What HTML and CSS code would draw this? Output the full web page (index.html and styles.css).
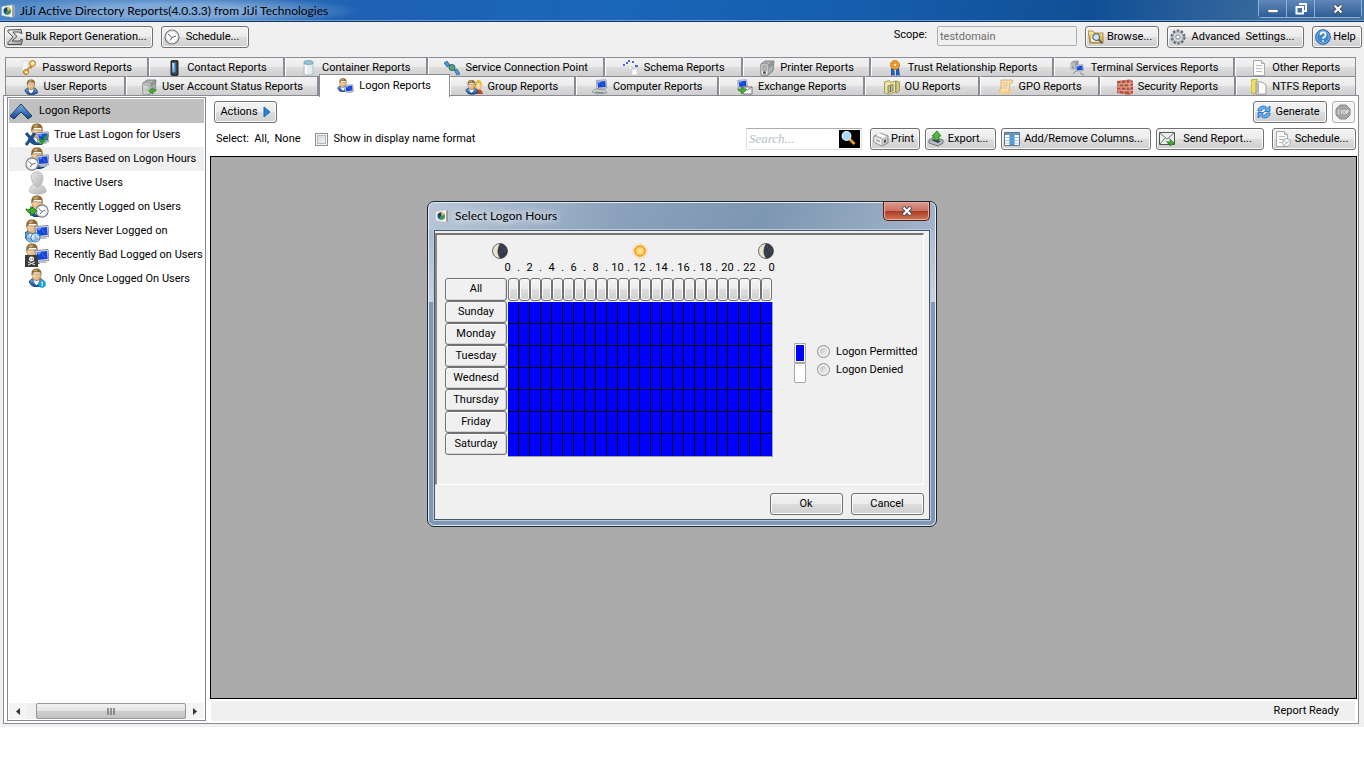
FILE: index.html
```html
<!DOCTYPE html>
<html lang="en">
<head>
<meta charset="utf-8">
<title>JiJi Active Directory Reports</title>
<link rel="stylesheet" href="styles.css">
</head>
<body>
<svg class="sprite" aria-hidden="true">
  <defs>
    <linearGradient id="g-blue" x1="0" y1="0" x2="0" y2="1"><stop offset="0" stop-color="#7cb4e8"/><stop offset="1" stop-color="#12438c"/></linearGradient>
    <linearGradient id="g-steel" x1="0" y1="0" x2="1" y2="1"><stop offset="0" stop-color="#fdfdfd"/><stop offset="1" stop-color="#8d949b"/></linearGradient>
    <linearGradient id="g-gold" x1="0" y1="0" x2="0" y2="1"><stop offset="0" stop-color="#fdf0a8"/><stop offset="1" stop-color="#d9992a"/></linearGradient>
    <linearGradient id="g-skin" x1="0" y1="0" x2="1" y2="1"><stop offset="0" stop-color="#fbe2bd"/><stop offset="1" stop-color="#d99a5b"/></linearGradient>
    <linearGradient id="g-grey" x1="0" y1="0" x2="1" y2="1"><stop offset="0" stop-color="#e6e6e6"/><stop offset="1" stop-color="#b4b4b4"/></linearGradient>
    <radialGradient id="g-sun"><stop offset="0" stop-color="#fff8b0"/><stop offset="1" stop-color="#fbb52c"/></radialGradient>
  </defs>
  <symbol id="user" viewBox="0 0 16 16"><path d="M2 12c0-2 2-3 4-3l4-.5c3 .5 4.500 2.500 4.500 5.500q-3 2-7 1.800T2 12z" fill="url(#g-blue)" stroke="#0c3468" stroke-width=".7"/><path d="M6 9.500l2 1.500 2-1.500v3l-2 2-2-2z" fill="#fff"/><path d="M4.200 5c0 3 1.600 5.800 3.800 5.800s3.800-2.800 3.800-5.800z" fill="url(#g-skin)" stroke="#9a6733" stroke-width=".5"/><path d="M4 6C3.300 2.300 5 .4 8 .4S12.700 2.300 12 6l-1-2.300-5-.2z" fill="#8a6a35"/><path d="M5 2.500Q7 .5 9 1.500L8 3z" fill="#c7a565"/></symbol>
  <symbol id="greyuser" viewBox="0 0 16 16"><path d="M3 14c0-3 1-5 3.500-5h3c3 .5 4.500 2.500 4.500 5q-5 3-11 0z" fill="url(#g-grey)" stroke="#a6a6a6" stroke-width=".4"/><path d="M4 4q.5-3.500 4-3.500T12 4q0 6-4 6.500Q5 9.500 4 4z" fill="url(#g-grey)" stroke="#b4b4b4" stroke-width=".5"/></symbol>
  <symbol id="monitor" viewBox="0 0 16 16"><path d="M1 2l13-1 1 11-13 1z" fill="#e3e7ec" stroke="#6b7480" stroke-width=".8"/><path d="M2.500 3.500l10.500-1 .7 8-10.200 1z" fill="#1746d4"/><path d="M3 4l4-.4-2 2.500zM8 5l3 4" fill="#6ba4ff" stroke="#6ba4ff" stroke-width=".5"/><path d="M4 13l7-1 2 2.500H4z" fill="#b8bec5"/></symbol>
  <symbol id="clock" viewBox="0 0 16 16"><circle cx="8" cy="8" r="7" fill="#f4f5f6" stroke="#747a80" stroke-width="1.200"/><circle cx="8" cy="8" r="5.600" fill="#fff" stroke="#c8ccd0" stroke-width=".6"/><path d="M4 5l4 3.500 4-1.500M8 8.500l-2 3" fill="none" stroke="#555b62"/></symbol>
  <symbol id="arrow" viewBox="0 0 16 16"><path d="M1 6l6 1V3l8 5.500-8 6v-4C4 11 2 9 1 6z" fill="#42ae2a" stroke="#176b10" stroke-width=".8"/></symbol>
  <symbol id="logo" viewBox="0 0 16 16"><path d="M1 3l12-2 2 1v12l-2 1-12-2z" fill="#f8f8f4" stroke="#c8c8c0" stroke-width=".7"/><path d="M13 1v14l1.500-1V2z" fill="#70767c"/><circle cx="7" cy="8" r="4.300" fill="#2468b8"/><path d="M7 3.800c2 0 3.500 1 4 3L7 8z" fill="#eec52b"/><path d="M11.300 8c0 3-2 4.300-4.300 4.300L5 9l3-1z" fill="#3f9b3b"/><path d="M3.500 6l3-2 1 3-3 3z" fill="#153c74"/></symbol>
  <symbol id="sigma" viewBox="0 0 16 16"><path d="M1 1l13-.5 1 4-2-.5-.5-1H6l4 4.500-5 4.500h8l1-2 1.500.5-1 5H1v-2l5-5.500-5-5z" fill="url(#g-steel)" stroke="#444" stroke-width=".9"/></symbol>
  <symbol id="keys" viewBox="0 0 16 16"><path d="M1 1h6v10H1z" fill="#f4f4f4" stroke="#cfcfcf" stroke-width=".6"/><circle cx="11.500" cy="3.500" r="3" fill="#f8d87a" stroke="#b07a1e"/><circle cx="12" cy="3" r="1" fill="#fff"/><path d="M10 6l-4 4M9 7l2 1" stroke="#bd8628" stroke-width="1.600"/><circle cx="5" cy="12" r="2.500" fill="#f5c760" stroke="#a86f18"/><path d="M5 12l2 1" stroke="#fff"/></symbol>
  <symbol id="phone" viewBox="0 0 16 16"><path d="M5 1l5-1 2 1v14l-3 1-4-1z" fill="#3a4148" stroke="#222"/><path d="M6 3l3.500-.4v10L6 12.500z" fill="#5f9ad8"/><path d="M6 3l2 0v9z" fill="#b9dcf7"/></symbol>
  <symbol id="jar" viewBox="0 0 16 16"><path d="M3 3h9v11q-4.500 2.500-9 0z" fill="#e2ecf1" stroke="#a2b1b9" stroke-width=".7"/><ellipse cx="7.500" cy="2.500" rx="4.800" ry="2" fill="#92c8dc" stroke="#5e8f9f" stroke-width=".6"/><path d="M5 5v9" stroke="#fff" stroke-width="2"/></symbol>
  <symbol id="satellite" viewBox="0 0 16 16"><path d="M0 3l3-2 3 4-3 2zM10 10l3-1 3 5-3 1z" fill="#4b9ad3" stroke="#174d7c" stroke-width=".6"/><path d="M4 5l7 5" stroke="#667" stroke-width="1.500"/><circle cx="8" cy="7.500" r="3" fill="#57a85f" stroke="#2264a4"/></symbol>
  <symbol id="schema" viewBox="0 0 16 16"><path d="M0 5h2M3 3h2M5 1h2M9 2h2M12 6h3" fill="none" stroke="#1c35dc" stroke-width="1.600"/><path d="M5 7h4v2H5zM9 9h5v6H9z" fill="#fff" stroke="#b8b8b8" stroke-width=".7" stroke-dasharray="2 1"/></symbol>
  <symbol id="server" viewBox="0 0 16 16"><path d="M2 4l4-3h9l-1 10-5 4H2z" fill="#adb2b6" stroke="#666" stroke-width=".7"/><path d="M2 4h7v11H2z" fill="#e7e8e9" stroke="#777" stroke-width=".6"/><path d="M3 6h5M3 8h5M3 10h5M10 5l4-3M10 7l4-3" stroke="#777"/><circle cx="5.500" cy="12.500" r="1.500" fill="#555"/></symbol>
  <symbol id="rosette" viewBox="0 0 16 16"><path d="M4 8h3l1 8-2-1-2 1zM9 8h3l1 8-2-1-2 1z" fill="#1d5bbb"/><circle cx="8" cy="5" r="4.500" fill="#f39c27" stroke="#b66913" stroke-dasharray="2 1"/><circle cx="8" cy="5" r="2" fill="#ffd98a" stroke="#b66913" stroke-width=".6"/></symbol>
  <symbol id="doc" viewBox="0 0 16 16"><path d="M2.500.5h8l3 3v12h-11z" fill="#fafafa" stroke="#aaa"/><path d="M10.500.5v3h3" fill="#ddd" stroke="#aaa"/><path d="M5 5.500h6M5 8.500h6M5 11.500h6" stroke="#bdbdbd"/></symbol>
  <symbol id="wall" viewBox="0 0 16 16"><path d="M0 2l13-1.500L16 2v12l-3 2L0 14z" fill="#b7503e"/><path d="M0 5l13-.5 3-1M0 8h13l3-1M0 11l13 1 3-1M4 2v3M9 1v4M2 5v3M7 5v3M12 4v4M4 8v3M9 8v4M2 11v3M7 11v4M13 1v15" stroke="#e9c3b4" fill="none" stroke-width=".8"/></symbol>
  <symbol id="files" viewBox="0 0 16 16"><path d="M0 1l6-1v13l-3 2-3-2z" fill="#f0e060" stroke="#9e8d20" stroke-width=".7"/><path d="M5 3h6l4 3v9H5z" fill="#fff" stroke="#888" stroke-width=".8"/><path d="M5 4h3v10H5z" fill="#aeb5bb"/></symbol>
  <symbol id="scroll" viewBox="0 0 16 16"><path d="M3 1h11q2 1 0 3h-2l-1 9H1q-1-2 2-3z" fill="#fae0ad" stroke="#d3a765" stroke-width=".8"/><path d="M5 4h5M5 6.500h5M4 9h5" stroke="#e2c28b"/><path d="M1 12q0 3 3 3h9q2-1 1-3z" fill="#f3cd8c"/></symbol>
  <symbol id="folder" viewBox="0 0 16 16"><path d="M0 2h5l1 2h9v10H2z" fill="url(#g-gold)" stroke="#95732b" stroke-width=".8"/><path d="M3 6h9v7H3z" fill="#fffbe7" stroke="#aaa15b" stroke-width=".5"/></symbol>
  <symbol id="ou" viewBox="0 0 16 16"><path d="M.5 3l5-1.500 1 2 5-1.500V13l-6 2-5-1z" fill="#efe5a3" stroke="#98894a" stroke-width=".8"/><path d="M12 2l3.500 1v9L12 14z" fill="#d6cc87" stroke="#98894a" stroke-width=".8"/><path d="M4 7l5-1.500V12L4 13.500z" fill="#b9c49a" stroke="#75734a" stroke-width=".8"/><path d="M6.500 6.500v6" stroke="#75734a"/></symbol>
  <symbol id="lens" viewBox="0 0 16 16"><path d="M9 9l5 5" stroke="#5a5a5a" stroke-width="2"/><circle cx="7" cy="7" r="3.800" fill="#cfe5f4" stroke="#565f66" stroke-width="1.200"/></symbol>
  <symbol id="gear" viewBox="0 0 16 16"><circle cx="8" cy="8" r="6.300" fill="none" stroke="#68727d" stroke-width="2.600" stroke-dasharray="2.500 1.450"/><circle cx="8" cy="8" r="5.300" fill="#d5d9de" stroke="#848d97"/><circle cx="8" cy="8" r="2.200" fill="#fff" stroke="#7a828a"/></symbol>
  <symbol id="help" viewBox="0 0 16 16"><circle cx="8" cy="8" r="7.300" fill="#3c89d6" stroke="#235792"/><circle cx="8" cy="8" r="6.200" fill="none" stroke="#9bc8f2" stroke-width=".7"/><path d="M5.500 6q0-2.600 2.600-2.600T10.600 6q0 1.300-1.300 2T8 9.800M8 11.300v1.500" stroke="#fff" stroke-width="1.700" fill="none"/></symbol>
  <symbol id="refresh" viewBox="0 0 16 16"><path d="M2 7q0-4.500 5-5 3 0 4.500 2L14 2v5.500H8.500l1.700-1.700Q7.500 3 5 7zM14 9q0 4.500-5 5-3 0-4.500-2L2 14V8.500h5.500l-1.700 1.700Q8.500 13 11 9z" fill="#67b0f0" stroke="#176aba" stroke-width=".8"/></symbol>
  <symbol id="stop" viewBox="0 0 16 16"><path d="M5 1h6l4 4v6l-4 4H5l-4-4V5z" fill="#a5a5a5" stroke="#888"/><path d="M2.500 6.500h2M2.500 8h2M2.500 9.500h2M5.500 6.500h2M6.500 6.500v3.500M8.500 6.500h2v3h-2zM11.500 10V6.500h2V8h-2" fill="none" stroke="#e6e6e6" stroke-width=".8"/></symbol>
  <symbol id="printer" viewBox="0 0 16 16"><path d="M1 5l6-3 8 3v7l-6 3-8-4z" fill="#c9cbcc" stroke="#777" stroke-width=".8"/><path d="M1 5l8 3v7l-8-4z" fill="#f3f3f3" stroke="#888" stroke-width=".6"/><path d="M3 4l3-2 7 3-3 2z" fill="#fff"/><path d="M3 8l4 1.500v2L3 10z" fill="#aab0b2"/><path d="M11 9l2-.7v3l-2 .7z" fill="#4f5558"/></symbol>
  <symbol id="export" viewBox="0 0 16 16"><path d="M1 9l4-3 10 3v3l-5 3-9-3z" fill="#b8bdc6" stroke="#555e6b" stroke-width=".8"/><path d="M3 9l3-1 7 2-3 2z" fill="#34404e"/><path d="M6 9V5H4l5-5 4 5h-2v4z" fill="#52b83b" stroke="#237c19" stroke-width=".8"/></symbol>
  <symbol id="columns" viewBox="0 0 16 16"><path d="M.5 1.500h15v13H.5z" fill="#fff" stroke="#5d7a94"/><path d="M6 2h4v12H6z" fill="#3c9be8"/><path d="M1 2h14v2H1z" fill="#6793b8"/><path d="M1 6.500h14M1 9.500h14M1 12h14M5.500 2v12M10.500 2v12" stroke="#8ba7bd" stroke-width=".7"/></symbol>
  <symbol id="mail" viewBox="0 0 16 16"><path d="M.5 1.500h15v12H.5z" fill="#eceeee" stroke="#555"/><path d="M1 2l7 6 7-6M1 13l5-6M15 13l-5-6" fill="none" stroke="#777"/></symbol>
  <symbol id="chevron" viewBox="0 0 24 18"><path d="M1 14L12 2l11 12-4 3-7-7-7 7z" fill="url(#g-blue)" stroke="#173b68"/></symbol>
  <symbol id="moon" viewBox="0 0 16 16"><circle cx="8" cy="8" r="7.500" fill="#e9e2cf" stroke="#6b6b68"/><path d="M8 .6q-5 7.400 0 14.800A7.400 7.400 0 0 0 8 .6z" fill="#343c49"/><path d="M9 4h2M10 8h3M8 11h2M12 5v1" stroke="#59616c" stroke-dasharray="1 1"/></symbol>
  <symbol id="sun" viewBox="0 0 16 16"><circle cx="8" cy="8" r="6.500" fill="none" stroke="#ffcd78" stroke-width="2" stroke-dasharray="1 1"/><circle cx="8" cy="8" r="5.200" fill="url(#g-sun)" stroke="#f18c16"/></symbol>
  <symbol id="magnify" viewBox="0 0 20 18"><path d="M10 9l5 5" stroke="#5b3211" stroke-width="3.600"/><path d="M10 9l5 5" stroke="#f2a445" stroke-width="2.200"/><circle cx="7" cy="6" r="4.300" fill="#a9d9fa" stroke="#e1eef6" stroke-width="1.300"/></symbol>
  <symbol id="cross" viewBox="0 0 12 10"><path d="M2 1l8 8M10 1L2 9" stroke="#434e5d" stroke-width="4"/><path d="M2.500 1.500l7 7M9.500 1.500l-7 7" stroke="#fff" stroke-width="2.200"/></symbol>
</svg>

<div class="app">
  <header class="titlebar">
    <svg class="logo"><use href="#logo"/></svg>
    <h1 class="title">JiJi Active Directory Reports(4.0.3.3) from JiJi Technologies</h1>
    <div class="winbtns">
      <button type="button" class="winbtn" aria-label="Minimize"><svg width="12" height="10"><path d="M1 5.500h10v3H1z" fill="#fff" stroke="#434e5d" stroke-width=".6"/></svg></button>
      <button type="button" class="winbtn" aria-label="Restore"><svg width="12" height="12"><path d="M4 1h7v7H9M1.500 4H8v6.500H1.500z" fill="none" stroke="#fff" stroke-width="2"/></svg></button>
      <button type="button" class="winbtn wide" aria-label="Close"><svg width="12" height="10"><use href="#cross"/></svg></button>
    </div>
  </header>

  <div class="toolbar">
    <button type="button" class="btn w-bulk"><svg class="ic"><use href="#sigma"/></svg><span>Bulk Report Generation...</span></button>
    <button type="button" class="btn w-sched"><svg class="ic"><use href="#clock"/></svg><span>Schedule...</span></button>
    <label class="scope push" for="scope">Scope:</label>
    <input class="scopebox" id="scope" type="text" value="testdomain" disabled>
    <button type="button" class="btn w-browse"><svg class="ic" viewBox="0 0 16 16"><use href="#folder" width="16" height="16"/><use href="#lens" x="2" y="2" width="14" height="14"/></svg><span>Browse...</span></button>
    <button type="button" class="btn w-adv"><svg class="ic"><use href="#gear"/></svg><span>Advanced&nbsp; Settings...</span></button>
    <button type="button" class="btn w-help"><svg class="ic"><use href="#help"/></svg><span>Help</span></button>
  </div>

  <nav class="tabs" aria-label="Reports">
    <div class="tabrow first">
      <button type="button" class="tab"><svg class="ic"><use href="#keys"/></svg>Password Reports</button>
      <button type="button" class="tab"><svg class="ic"><use href="#phone"/></svg>Contact Reports</button>
      <button type="button" class="tab"><svg class="ic"><use href="#jar"/></svg>Container Reports</button>
      <button type="button" class="tab"><svg class="ic"><use href="#satellite"/></svg>Service Connection Point</button>
      <button type="button" class="tab"><svg class="ic"><use href="#schema"/></svg>Schema Reports</button>
      <button type="button" class="tab"><svg class="ic"><use href="#server"/></svg>Printer Reports</button>
      <button type="button" class="tab"><svg class="ic"><use href="#rosette"/></svg>Trust Relationship Reports</button>
      <button type="button" class="tab"><svg class="ic" viewBox="0 0 16 16"><use href="#server" width="9" height="10"/><use href="#monitor" x="5" y="4" width="9" height="9"/><path d="M3 14l3-3M10 13l4 2" stroke="#888"/></svg>Terminal Services Reports</button>
      <button type="button" class="tab"><svg class="ic"><use href="#doc"/></svg>Other Reports</button>
    </div>
    <div class="tabrow second">
      <button type="button" class="tab"><svg class="ic"><use href="#user"/></svg>User Reports</button>
      <button type="button" class="tab"><svg class="ic" viewBox="0 0 16 16"><use href="#server" width="16" height="16"/><use href="#greyuser" y="6" width="10" height="10"/><use href="#arrow" x="7" y="7" width="9" height="9" transform="matrix(-1 0 0 1 23 0)"/></svg>User Account Status Reports</button>
      <button type="button" class="tab on"><svg class="ic" viewBox="0 0 16 16"><use href="#user" x="-2" width="14" height="14"/><use href="#monitor" x="6" y="6" width="10" height="10"/></svg>Logon Reports</button>
      <button type="button" class="tab"><svg class="ic" viewBox="0 0 16 16"><g transform="translate(7 1)"><path d="M0 14q0-5 4-5t5 5z" fill="#b94a31"/><ellipse cx="4.500" cy="5" rx="3.500" ry="5" fill="#e9b840"/><ellipse cx="4.500" cy="6" rx="2" ry="3" fill="#f8d9b2"/></g><use href="#user" x="-3" width="15" height="16"/></svg>Group Reports</button>
      <button type="button" class="tab"><svg class="ic" viewBox="0 0 16 16"><use href="#monitor" x="3" width="13" height="12"/><path d="M3 10l10 1 2 3-10 1-5-2z" fill="#ccd1d8" stroke="#777" stroke-width=".6"/><path d="M3 13l9 1" stroke="#777"/></svg>Computer Reports</button>
      <button type="button" class="tab"><svg class="ic" viewBox="0 0 16 16"><use href="#monitor" width="11" height="11"/><path d="M6 8h9v7H6z" fill="#fff" stroke="#777"/><path d="M6 8l4.500 3L15 8" fill="none" stroke="#777"/><use href="#arrow" y="6" width="10" height="10"/></svg>Exchange Reports</button>
      <button type="button" class="tab"><svg class="ic"><use href="#ou"/></svg>OU Reports</button>
      <button type="button" class="tab"><svg class="ic"><use href="#scroll"/></svg>GPO Reports</button>
      <button type="button" class="tab"><svg class="ic"><use href="#wall"/></svg>Security Reports</button>
      <button type="button" class="tab"><svg class="ic"><use href="#files"/></svg>NTFS Reports</button>
    </div>
  </nav>

  <main class="page">
    <aside class="side">
      <h2 class="sidehead"><svg width="24" height="18"><use href="#chevron"/></svg>Logon Reports</h2>
      <ul class="list">
        <li><a href="#"><svg class="big" viewBox="0 0 24 24"><use href="#user" x="1" width="22" height="22"/><use href="#monitor" x="11" y="7" width="14" height="16"/><path d="M1 10l10 11M10 10L1 22" stroke="#1c4f8c" stroke-width="3"/><path d="M14 16l3 4 6-8" fill="none" stroke="#2f9d22" stroke-width="2.500"/></svg>True Last Logon for Users</a></li>
        <li class="sel"><a href="#"><svg class="big" viewBox="0 0 24 24"><use href="#user" x="1" width="22" height="22"/><use href="#monitor" x="11" y="6" width="14" height="16"/><use href="#clock" y="10" width="14" height="14"/></svg>Users Based on Logon Hours</a></li>
        <li><a href="#"><svg class="big"><use href="#greyuser"/></svg>Inactive Users</a></li>
        <li><a href="#"><svg class="big" viewBox="0 0 24 24"><use href="#user" x="1" width="22" height="22"/><use href="#clock" x="10" y="9" width="14" height="14"/><use href="#arrow" y="8" width="13" height="15"/></svg>Recently Logged on Users</a></li>
        <li><a href="#"><svg class="big" viewBox="0 0 24 24"><use href="#user" x="-4" width="22" height="22"/><use href="#monitor" x="9" y="5" width="16" height="17"/><circle cx="5.500" cy="18.500" r="4.500" fill="#d5efff99" stroke="#2679b8"/><circle cx="10.500" cy="18.500" r="4.500" fill="#d5efff99" stroke="#2679b8"/></svg>Users Never Logged on</a></li>
        <li><a href="#"><svg class="big" viewBox="0 0 24 24"><use href="#user" x="-4" width="22" height="22"/><use href="#monitor" x="9" y="5" width="16" height="17"/><path d="M0 12h13v12H0z" fill="#3c3c3c"/><path d="M3 19l7 3M10 19l-7 3" stroke="#eee"/><circle cx="6.500" cy="16" r="2.500" fill="#fff"/><path d="M5.500 16h.8M7.200 16h.8" stroke="#222"/></svg>Recently Bad Logged on Users</a></li>
        <li><a href="#"><svg class="big" viewBox="0 0 24 24"><use href="#user" x="2" y="1" width="19" height="19"/><circle cx="17" cy="17" r="3.800" fill="#159be0"/><path d="M16 15.500l1.200-.7v4.500" stroke="#fff" fill="none"/></svg>Only Once Logged On Users</a></li>
      </ul>
      <div class="hscroll">
        <button type="button" class="arrowbtn" aria-label="Scroll left"><svg width="4" height="7"><path d="M4 0v7L0 3.500z" fill="#333"/></svg></button>
        <div class="thumb"><svg width="8" height="7"><path d="M1 0v7M4 0v7M7 0v7" stroke="#777" stroke-width="1.500"/></svg></div>
        <button type="button" class="arrowbtn" aria-label="Scroll right"><svg width="4" height="7"><path d="M0 0v7l4-3.500z" fill="#333"/></svg></button>
      </div>
    </aside>

    <section class="content">
      <div class="bar bar1">
        <button type="button" class="btn w-actions"><span>Actions</span><svg width="8" height="12"><path d="M1 1l6 5-6 5z" fill="#2585d8" stroke="#1866ae"/></svg></button>
        <button type="button" class="btn w-gen push"><svg class="ic"><use href="#refresh"/></svg><span>Generate</span></button>
        <button type="button" class="btn stopbtn" aria-label="Stop" disabled><svg class="ic"><use href="#stop"/></svg></button>
      </div>
      <div class="bar bar2">
        <span class="select">Select:&nbsp; <a href="#">All</a>,&nbsp; <a href="#">None</a></span>
        <label class="check"><input type="checkbox">Show in display name format</label>
        <div class="search push">
          <input type="text" placeholder="Search..." aria-label="Search">
          <button type="button" aria-label="Find"><svg width="21" height="18"><use href="#magnify"/></svg></button>
        </div>
        <button type="button" class="btn w-print"><svg class="ic"><use href="#printer"/></svg><span>Print</span></button>
        <button type="button" class="btn w-export"><svg class="ic"><use href="#export"/></svg><span>Export...</span></button>
        <button type="button" class="btn w-cols"><svg class="ic"><use href="#columns"/></svg><span>Add/Remove Columns...</span></button>
        <button type="button" class="btn w-send"><svg class="ic" viewBox="0 0 16 16"><use href="#mail" width="16" height="16"/><use href="#arrow" x="7" y="7" width="9" height="9"/></svg><span>Send Report...</span></button>
        <button type="button" class="btn w-sched2"><svg class="ic" viewBox="0 0 16 16"><use href="#doc" x="-1" width="16" height="16"/><use href="#clock" x="7" y="7" width="9" height="9"/></svg><span>Schedule...</span></button>
      </div>
      <div class="canvas"></div>
      <footer class="status">Report Ready</footer>
    </section>
  </main>

  <div class="dialog" role="dialog" aria-labelledby="dlg-title">
    <div class="dlgbar">
      <svg class="logo"><use href="#logo"/></svg>
      <h2 class="dlgtitle" id="dlg-title">Select Logon Hours</h2>
      <button type="button" class="close" aria-label="Close"><svg width="12" height="10"><use href="#cross"/></svg></button>
    </div>
    <div class="dlgbody">
      <div class="sunken">
        <div class="picker">
          <div class="sky"><svg class="ic"><use href="#moon"/></svg><svg class="ic"><use href="#sun"/></svg><svg class="ic"><use href="#moon"/></svg></div>
          <div class="hours" id="hours"></div>
          <div class="days" id="days"></div>
          <div class="cols" id="cols"></div>
          <div class="cells" id="cells"></div>
        </div>
        <div class="legend">
          <div class="swatches"><i class="swatch permit"></i><i class="swatch"></i></div>
          <div class="radios">
            <label><input type="radio" name="logon">Logon Permitted</label>
            <label><input type="radio" name="logon">Logon Denied</label>
          </div>
        </div>
      </div>
      <div class="dlgactions">
        <button type="button" class="btn plain">Ok</button>
        <button type="button" class="btn plain">Cancel</button>
      </div>
    </div>
  </div>
</div>
<script src="grid.js"></script>
</body>
</html>
```

FILE: grid.js
```js
const add = (id, tag, text, label) => {
  const el = document.createElement(tag);
  if (tag === 'button') el.type = 'button';
  if (text) el.textContent = text;
  if (label) el.setAttribute('aria-label', label);
  document.getElementById(id).append(el);
};

for (let h = 0; h <= 24; h++) add('hours', 'span', h % 2 ? '.' : String(h % 24));
['All', 'Sunday', 'Monday', 'Tuesday', 'Wednesd', 'Thursday', 'Friday', 'Saturday']
  .forEach((day) => add('days', 'button', day));
for (let h = 0; h < 24; h++) add('cols', 'button', '', 'Hour ' + h);
for (let c = 0; c < 7 * 24; c++) add('cells', 'i');
```

FILE: styles.css
```css
* { box-sizing: border-box; }
body {
  margin: 0;
  background: #fff;
  color: #000;
  font: 11px/14px Roboto, "Liberation Sans", Arial, sans-serif;
}
button, input { font: inherit; color: inherit; }
button { white-space: nowrap; }
a { color: inherit; text-decoration: none; }
h1, h2 { margin: 0; font-weight: normal; }
svg { flex: none; display: block; }
.sprite { position: absolute; width: 0; height: 0; }
.ic { width: 16px; height: 16px; overflow: visible; }
.logo { width: 14px; height: 14px; }
.big { width: 24px; height: 24px; }
.push { margin-left: auto; }

.app {
  position: relative;
  display: flex;
  flex-direction: column;
  height: calc(100vh - 41px);
  min-height: 600px;
  background: #f0f0f0;
}

.titlebar {
  display: flex;
  align-items: center;
  gap: 5px;
  height: 22px;
  padding-left: 1px;
  border-bottom: 1px solid #17365f;
  box-shadow: inset 0 -1px #6a9ed8;
  background:
    radial-gradient(ellipse 190px 16px at 170px 11px, #7fa9d8 40%, transparent),
    linear-gradient(100deg, #4b84c4, #1f62b4 26%, #1a66b8 45%, #155cab 65%, #104f95 80%, #44709f 96%);
}
.title {
  font: 12px/16px Lato, "Noto Sans", sans-serif;
  white-space: nowrap;
}
.winbtns {
  display: flex;
  align-self: flex-start;
  margin: 0 2px 0 auto;
  height: 18px;
  border: 1px solid #8fb0d4;
  border-top: 0;
  border-radius: 0 0 4px 4px;
}
.winbtn {
  display: flex;
  align-items: center;
  justify-content: center;
  width: 28px;
  padding: 0;
  border: 0;
  border-right: 1px solid #8fb0d4;
  background: linear-gradient(#5f88b8, #2d5d98);
}
.winbtn.wide { width: 46px; border-right: 0; }

.toolbar {
  display: flex;
  align-items: flex-start;
  gap: 8px;
  height: 35px;
  padding: 4px 2px 0 4px;
}
.btn {
  display: flex;
  align-items: center;
  height: 22px;
  padding: 0 3px 0 2px;
  border: 1px solid #707070;
  border-radius: 3px;
  box-shadow: inset 0 0 0 1px #fbfbfb;
  background: linear-gradient(#f3f3f3, #ebebeb 50%, #dddddd 50%, #cfcfcf);
}
.btn span { flex: 1; text-align: center; }
.w-bulk { width: 149px; }
.w-sched { width: 88px; }
.w-browse { width: 74px; }
.w-adv { width: 137px; }
.w-help { width: 50px; }
.w-actions { width: 63px; }
.w-gen { width: 74px; }
.w-print { width: 50px; }
.w-export { width: 71px; }
.w-cols { width: 150px; }
.w-send { width: 108px; }
.w-sched2 { width: 84px; margin-left: 3px; }
.scope { padding: 2px 2px 0 0; }
.scopebox {
  width: 140px;
  height: 20px;
  padding: 0 2px;
  border: 1px solid #afafaf;
  border-radius: 2px;
  background: #f0f0f0;
  color: #6d6d6d;
}

.tabs { padding: 0 8px 0 5px; }
.tabrow { display: flex; height: 19px; }
.tab {
  display: flex;
  align-items: center;
  justify-content: center;
  gap: 5px;
  min-width: 0;
  padding: 2px 0 0;
  border: 1px solid #898c95;
  border-bottom: 0;
  border-left-color: #fff;
  border-right-width: 2px;
  background: linear-gradient(#f3f3f3, #ebebeb 50%, #dddddd 50%, #cfcfcf);
}
.tab:first-child { border-left-color: #898c95; }
.tab:last-child { border-right-width: 1px; }
.tab.on {
  height: 23px;
  margin-top: -2px;
  padding-bottom: 2px;
  z-index: 1;
  border-right-width: 1px;
  border-left-color: #898c95;
  background: #fff;
}
.first .tab:nth-child(1) { flex: 144 1 0; }
.first .tab:nth-child(2) { flex: 135 1 0; }
.first .tab:nth-child(3) { flex: 143 1 0; }
.first .tab:nth-child(4) { flex: 178 1 0; }
.first .tab:nth-child(5) { flex: 137 1 0; }
.first .tab:nth-child(6) { flex: 128 1 0; }
.first .tab:nth-child(7) { flex: 183 1 0; }
.first .tab:nth-child(8) { flex: 182 1 0; }
.first .tab:nth-child(9) { flex: 121 1 0; }
.second .tab:nth-child(1) { flex: 120 1 0; }
.second .tab:nth-child(2) { flex: 195 1 0; }
.second .tab:nth-child(3) { flex: 131 1 0; }
.second .tab:nth-child(4) { flex: 126 1 0; }
.second .tab:nth-child(5) { flex: 143 1 0; }
.second .tab:nth-child(6) { flex: 146 1 0; }
.second .tab:nth-child(7) { flex: 114 1 0; }
.second .tab:nth-child(8) { flex: 120 1 0; }
.second .tab:nth-child(9) { flex: 135 1 0; }
.second .tab:nth-child(10) { flex: 121 1 0; }

.page {
  flex: 1;
  display: flex;
  gap: 4px;
  min-height: 0;
  margin: 0 5px 3px 3px;
  padding: 1px 1px 2px 3px;
  border: 1px solid #898c95;
  background: #fff;
}
.side {
  display: flex;
  flex-direction: column;
  width: 199px;
  padding: 1px;
  border: 1px solid #828790;
}
.sidehead {
  display: flex;
  align-items: center;
  gap: 6px;
  height: 24px;
  font-size: 11px;
  background: #c0c0c0;
}
.list { margin: 0; padding: 0; list-style: none; flex: 1; }
.list a {
  display: flex;
  align-items: center;
  gap: 5px;
  height: 24px;
  padding-left: 16px;
  white-space: nowrap;
}
.list .sel { background: #f0f0f0; }
.hscroll { display: flex; height: 16px; background: #f0f0f0; }
.arrowbtn {
  display: flex;
  align-items: center;
  justify-content: center;
  width: 18px;
  padding: 0;
  border: 0;
  background: #f4f4f4;
}
.thumb {
  flex: 1;
  display: flex;
  align-items: center;
  justify-content: center;
  margin: 0 0 0 9px;
  border: 1px solid #979797;
  border-radius: 2px;
  background: linear-gradient(#f3f3f3, #e3e3e3 50%, #cdcdcd 50%, #c4c4c4);
}

.content { flex: 1; display: flex; flex-direction: column; min-width: 0; }
.bar { display: flex; align-items: center; gap: 5px; padding: 0 1px 0 4px; }
.bar1 { height: 30px; padding-right: 2px; }
.bar2 { height: 24px; margin-bottom: 5px; padding-left: 6px; }
.w-actions svg { margin: 0 2px; }
.stopbtn { width: 23px; border-color: #adb2b5; background: #f4f4f4; }
.select { margin-right: 9px; }
.check { display: flex; align-items: center; gap: 6px; }
.check input {
  appearance: none;
  width: 13px;
  height: 13px;
  margin: 0;
  border: 1px solid #8e8f8f;
  box-shadow: inset 0 0 0 1px #f4f4f4, inset 0 0 0 2px #b5b9bd;
  background: linear-gradient(135deg, #cfd3d8, #f6f6f6);
}
.search {
  display: flex;
  align-items: center;
  width: 116px;
  height: 22px;
  margin-right: 3px;
  padding-right: 1px;
  border: 1px solid #e2e3ea;
  border-top-color: #abadb3;
}
.search input {
  flex: 1;
  min-width: 0;
  padding: 0 2px;
  border: 0;
  font: italic 13px/16px "Liberation Serif", serif;
}
.search input::placeholder { color: #b4c0cc; }
.search button { padding: 0; border: 0; background: #000; }
.canvas { flex: 1; border: 1px solid #000; background: #ababab; }
.status {
  margin: 2px 2px 0 1px;
  padding: 3px 16px;
  background: #f0f0f0;
  text-align: right;
}

/* modal window, centred over the application */
.dialog {
  position: absolute;
  left: 50%;
  top: 50%;
  transform: translate(-50%, -50%);
  width: 510px;
  padding: 0 6px 6px;
  border: 1px solid #1d2530;
  border-radius: 7px;
  box-shadow: inset 0 0 0 1px #e4edf6;
  background:
    linear-gradient(#a9bbce, #c6d4e3 72px, #829ab6 72px, #7d97b5) 0 28px no-repeat,
    linear-gradient(115deg, #b9c8d8, #8ba1bb 30%, #7d96b2 52%, #a4b6ca 80%, #b9c9da);
}
.dlgbar { display: flex; align-items: center; gap: 6px; height: 28px; padding-left: 1px; }
.dlgtitle {
  font: 12px/16px Lato, "Noto Sans", sans-serif;
  text-shadow: 0 0 8px #fff, 0 0 8px #fff;
}
.close {
  display: flex;
  align-items: center;
  justify-content: center;
  align-self: flex-start;
  width: 47px;
  height: 19px;
  margin-left: auto;
  padding: 0;
  border: 1px solid #4f1f1a;
  border-top: 0;
  border-radius: 0 0 5px 5px;
  box-shadow: inset 0 0 0 1px #e9aaa0;
  background: linear-gradient(#d99a8f, #cc7060 50%, #a83a22 50%, #cf7a58);
}
.dlgbody {
  padding: 2px 5px 4px 0;
  border: 1px solid #4b5663;
  box-shadow: 0 0 0 1px #b9cbe0;
  background: #f0f0f0;
}
.sunken {
  display: flex;
  align-items: flex-start;
  gap: 21px;
  min-height: 252px;
  padding: 8px 8px 0;
  border: 1px solid #fff;
  border-top: 2px solid #757575;
  border-left: 2px solid #898989;
}
.picker {
  display: grid;
  grid-template-columns: 62px 1px 265px;
  grid-template-rows: 16px 19px 24px 155px;
}
.sky {
  grid-column: 1 / 4;
  display: grid;
  grid-template-columns: 140px 126px 16px;
  padding-left: 47px;
}
.hours {
  grid-column: 1 / 4;
  display: grid;
  grid-template-columns: repeat(25, 11px);
  justify-items: center;
  align-items: center;
  padding-left: 57px;
}
.hours span { white-space: nowrap; }
.days {
  grid-column: 1;
  grid-row: 3 / 5;
  display: grid;
  grid-template-rows: 23px repeat(7, 22px);
}
.days button {
  padding: 0;
  border: 1px solid #707070;
  border-radius: 3px;
  box-shadow: inset -1px -1px #d4d4d4, inset 1px 1px #fbfbfb;
  background: #f0f0f0;
}
.cols {
  grid-column: 3;
  grid-row: 3;
  display: grid;
  grid-template-columns: repeat(24, 11px);
  padding-bottom: 1px;
}
.cols button {
  padding: 0;
  border: 1px solid #707070;
  border-radius: 3px;
  box-shadow: inset 0 0 0 1px #fbfbfb;
  background: linear-gradient(#f3f3f3, #ebebeb 50%, #dddddd 50%, #cfcfcf);
}
.cells {
  grid-column: 3;
  grid-row: 4;
  display: grid;
  grid-template-columns: repeat(24, 11px);
  grid-template-rows: repeat(7, 22px);
  border-right: 1px solid #a0a0a0;
  border-bottom: 1px solid #a0a0a0;
}
.cells i { border-right: 1px solid #000; border-bottom: 1px solid #000; background: #00f; }
.cells i:nth-child(24n) { border-right: 0; }
.cells i:nth-child(n+145) { border-bottom: 0; }
.legend { display: flex; gap: 11px; padding-top: 100px; }
.swatches { display: grid; grid-template-rows: 20px 20px; width: 12px; }
.swatch { border: 1px solid #a8a8a8; border-radius: 1px; background: #fff; }
.permit { border-width: 1px; box-shadow: inset 0 0 0 1px #fff; background: #00f; }
.radios label { display: flex; align-items: center; gap: 6px; height: 18px; white-space: nowrap; }
.radios input {
  appearance: none;
  width: 13px;
  height: 13px;
  margin: 0;
  border: 1px solid #8e8f8f;
  border-radius: 50%;
  box-shadow: inset 0 0 0 2px #eee;
  background: linear-gradient(135deg, #aeb3b9, #fff);
}
.dlgactions { display: flex; justify-content: flex-end; gap: 8px; padding-top: 8px; }
.plain { width: 73px; justify-content: center; }
```
